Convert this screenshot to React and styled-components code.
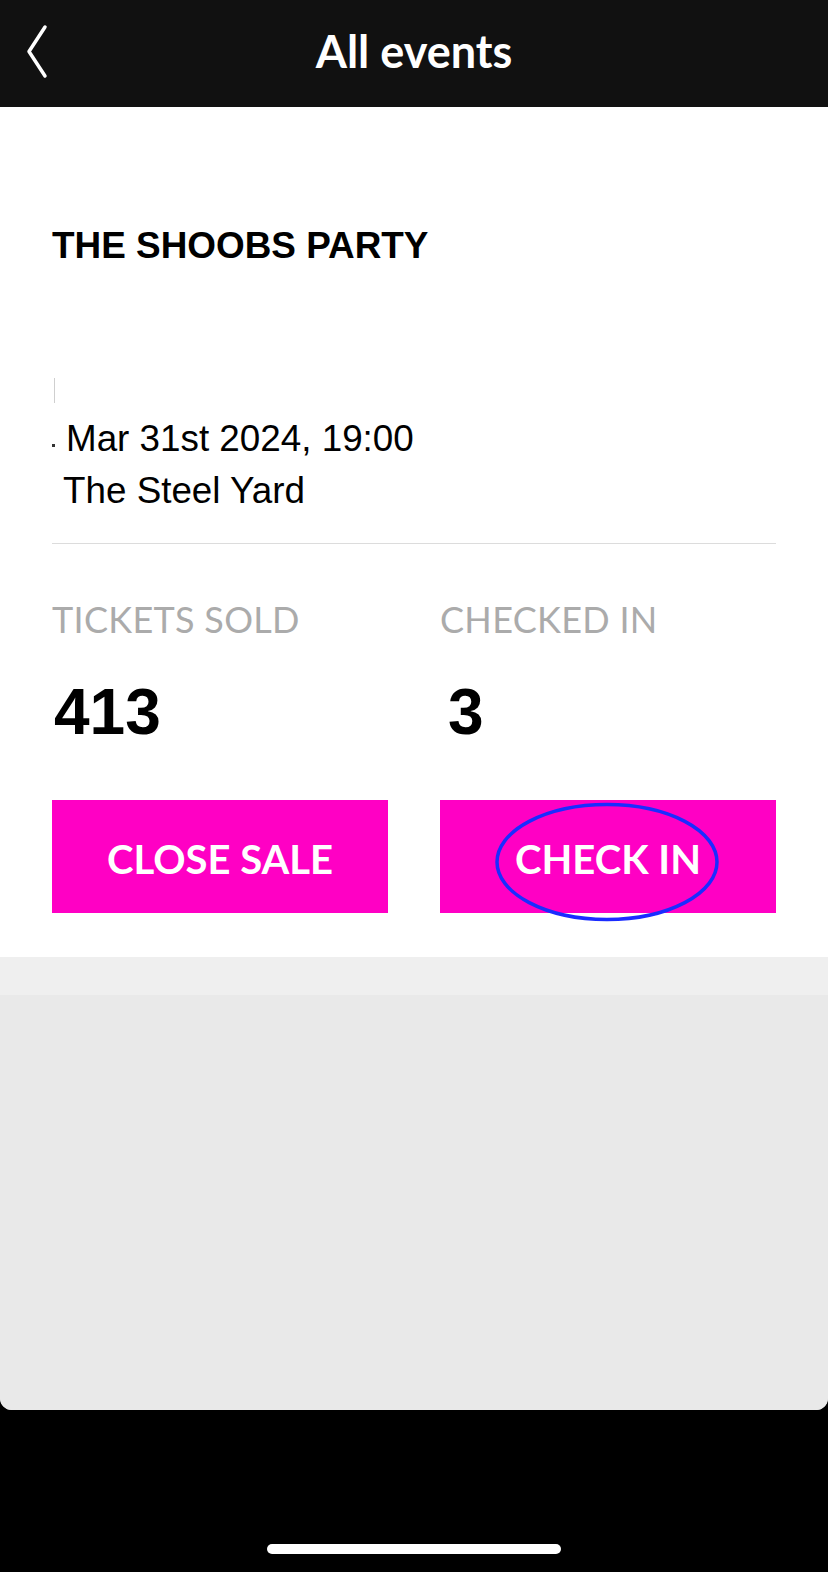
import React from "react";
import styled, { createGlobalStyle } from "styled-components";

const Global = createGlobalStyle`
  html, body { margin: 0; padding: 0; background: #000; }
  body { font-family: "Liberation Sans", Arial, sans-serif; }
  * { box-sizing: border-box; }
`;

const Screen = styled.div`
  width: 828px;
  height: 1572px;
  display: flex;
  flex-direction: column;
  background: #000;
  overflow: hidden;
`;

const Sheet = styled.div`
  display: flex;
  flex-direction: column;
  border-radius: 0 0 12px 12px;
  overflow: hidden;
  background: #e9e9e9;
`;

const Header = styled.header`
  height: 107px;
  background: #111;
  display: grid;
  grid-template-columns: 100px 1fr 100px;
  align-items: center;
`;

const BackButton = styled.button`
  width: 60px;
  height: 107px;
  margin-left: 8px;
  padding: 0 0 4px;
  background: none;
  border: 0;
  display: flex;
  align-items: center;
  justify-content: center;
`;

const Title = styled.h1`
  margin: 0;
  text-align: center;
  color: #fff;
  font-family: Lato, "Noto Sans", sans-serif;
  font-weight: 700;
  font-size: 45px;
  line-height: 54px;
  padding-bottom: 6px;
`;

const Card = styled.section`
  background: #fff;
  padding: 118px 52px 44px 52px;
  display: flex;
  flex-direction: column;
`;

const EventName = styled.h2`
  margin: 0;
  font-family: "Liberation Sans", Arial, sans-serif;
  font-weight: 700;
  font-size: 36.9px;
  line-height: 42px;
  color: #000;
`;

const Marker = styled.div`
  width: 1px;
  height: 25px;
  background: #cfcfcf;
  margin: 111px 0 10px 2px;
`;

const InfoLine = styled.div`
  display: flex;
  align-items: center;
  font-family: "Liberation Sans", Arial, sans-serif;
  font-size: 36.8px;
  line-height: 52px;
  color: #000;
  padding-left: ${(p) => p.$indent || 0}px;
`;

const Dot = styled.span`
  width: 3px;
  height: 3px;
  background: #333;
  margin: 12px 11px 0 0;
`;

const Divider = styled.hr`
  margin: 26px 0 54px;
  border: 0;
  height: 1px;
  background: #dcdcdc;
`;

const Stats = styled.div`
  display: grid;
  grid-template-columns: 1fr 1fr;
  column-gap: 52px;
`;

const Stat = styled.div`
  display: flex;
  flex-direction: column;
`;

const StatLabel = styled.div`
  font-family: Lato, "Noto Sans", sans-serif;
  font-size: 36px;
  line-height: 42px;
  color: #ababab;
  letter-spacing: 0.3px;
`;

const StatValue = styled.div`
  margin-top: 36px;
  font-family: "Liberation Sans", Arial, sans-serif;
  font-weight: 700;
  font-size: 64px;
  line-height: 72px;
  color: #000;
  padding-left: ${(p) => p.$indent || 0}px;
`;

const ActionButton = styled.button`
  position: relative;
  margin-top: 52px;
  height: 113px;
  border: 0;
  background: #ff00c4;
  color: #fff;
  font-family: Lato, "Noto Sans", sans-serif;
  font-weight: 700;
  font-size: 40px;
  padding: 4px 0 0;
  display: flex;
  align-items: center;
  justify-content: center;
`;

const Highlight = styled.svg`
  position: absolute;
  left: 55px;
  top: 2px;
  width: 224px;
  height: 120px;
  overflow: visible;
  pointer-events: none;
`;

const Band = styled.div`
  height: 38px;
  background: #efefef;
`;

const Empty = styled.div`
  height: 415px;
  background: #e9e9e9;
`;

const Footer = styled.div`
  flex: 1;
  display: flex;
  align-items: flex-end;
  justify-content: center;
  padding-bottom: 18px;
`;

const HomeIndicator = styled.div`
  width: 294px;
  height: 10px;
  border-radius: 5px;
  background: #fff;
`;

export default function App() {
  return (
    <>
      <Global />
      <Screen>
        <Sheet>
          <Header>
            <BackButton aria-label="Back">
              <svg width="24" height="56" viewBox="0 0 24 56">
                <path
                  d="M19 3 L3 27.5 L19 52"
                  fill="none"
                  stroke="#fff"
                  strokeWidth="3.5"
                  strokeLinecap="round"
                  strokeLinejoin="round"
                />
              </svg>
            </BackButton>
            <Title>All events</Title>
            <div />
          </Header>
          <Card>
            <EventName>THE SHOOBS PARTY</EventName>
            <Marker />
            <InfoLine>
              <Dot />
              Mar 31st 2024, 19:00
            </InfoLine>
            <InfoLine $indent={11}>The Steel Yard</InfoLine>
            <Divider />
            <Stats>
              <Stat>
                <StatLabel>TICKETS SOLD</StatLabel>
                <StatValue $indent={2}>413</StatValue>
                <ActionButton>CLOSE SALE</ActionButton>
              </Stat>
              <Stat>
                <StatLabel>CHECKED IN</StatLabel>
                <StatValue $indent={8}>3</StatValue>
                <ActionButton>
                  CHECK IN
                  <Highlight viewBox="0 0 224 120">
                    <ellipse cx="112" cy="60" rx="110" ry="57.5" fill="none" stroke="#1a2cff" strokeWidth="3.5" />
                  </Highlight>
                </ActionButton>
              </Stat>
            </Stats>
          </Card>
          <Band />
          <Empty />
        </Sheet>
        <Footer>
          <HomeIndicator />
        </Footer>
      </Screen>
    </>
  );
}
